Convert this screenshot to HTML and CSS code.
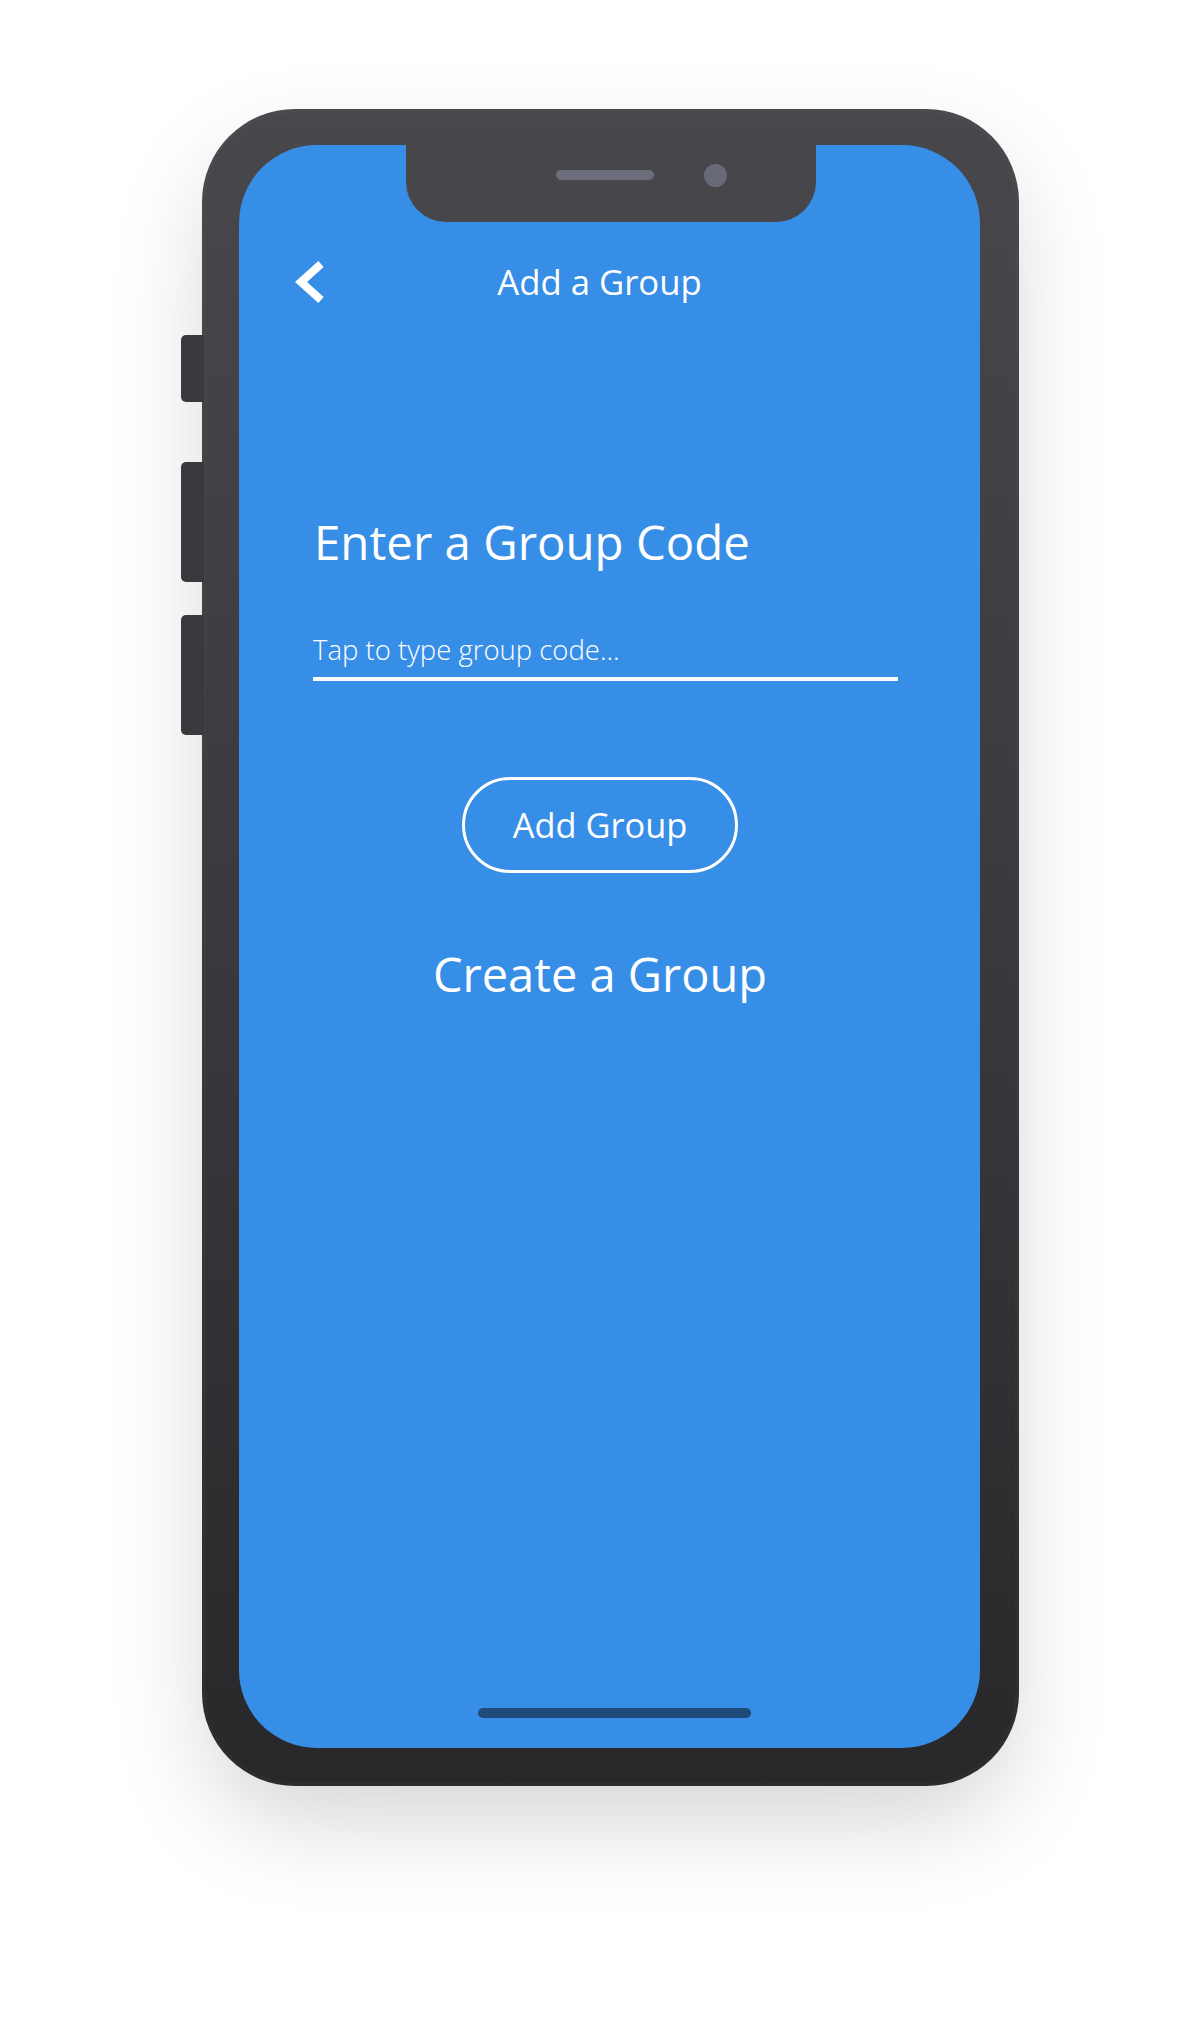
FILE: index.html
```html
<!DOCTYPE html>
<html lang="en">
<head>
<meta charset="utf-8">
<title>Add a Group</title>
<link rel="stylesheet" href="styles.css">
</head>
<body>
<div class="stage">
  <div class="phone">
    <span class="side-btn side-btn--mute"></span>
    <span class="side-btn side-btn--up"></span>
    <span class="side-btn side-btn--down"></span>
    <div class="screen">
      <div class="notch">
        <span class="speaker"></span>
        <span class="camera"></span>
      </div>
      <header class="nav">
        <svg class="back" width="30" height="46" viewBox="0 0 30 46" aria-label="Back">
          <polyline points="27,5 7,23 27,41" fill="none" stroke="#ffffff" stroke-width="8" stroke-linejoin="miter" stroke-linecap="butt"/>
        </svg>
        <h1 class="nav-title">Add a Group</h1>
        <span class="nav-spacer"></span>
      </header>
      <main class="content">
        <h2 class="heading">Enter a Group Code</h2>
        <div class="field"><span class="placeholder">Tap to type group code...</span></div>
        <div class="actions">
          <button class="btn-outline" type="button">Add Group</button>
          <a class="create-link">Create a Group</a>
        </div>
      </main>
      <div class="home-indicator"></div>
    </div>
  </div>
</div>
</body>
</html>
```
FILE: styles.css
```css
html, body {
  margin: 0;
  padding: 0;
  background: #ffffff;
}

body {
  font-family: "Open Sans", "Noto Sans", sans-serif;
  color: #ffffff;
}

.stage {
  width: 1200px;
  height: 2038px;
  overflow: hidden;
  padding-top: 109px;
  box-sizing: border-box;
}

.phone {
  position: relative;
  margin-left: 202px;
  width: 817px;
  height: 1677px;
  box-sizing: border-box;
  padding: 36px 39px 38px 37px;
  border-radius: 93px;
  background: linear-gradient(180deg, #48474c 0%, #3b3a3f 45%, #28282a 100%);
  box-shadow: 0 40px 100px -10px rgba(0, 0, 0, 0.18), inset 0 0 0 4px rgba(255, 255, 255, 0.02);
}

.side-btn {
  position: absolute;
  left: -21px;
  width: 23px;
  border-radius: 5px 0 0 5px;
  background: #3a393d;
}

.side-btn--mute { top: 226px; height: 67px; }
.side-btn--up { top: 353px; height: 120px; }
.side-btn--down { top: 506px; height: 120px; }

.screen {
  position: relative;
  width: 741px;
  height: 1603px;
  border-radius: 78px;
  background: #378ee6;
  display: flex;
  flex-direction: column;
  overflow: hidden;
}

.notch {
  position: absolute;
  top: 0;
  left: 167px;
  width: 410px;
  height: 77px;
  box-sizing: border-box;
  padding: 0 0 17px 150px;
  border-radius: 0 0 40px 40px;
  background: #47464b;
  display: flex;
  align-items: center;
  gap: 50px;
}

.speaker {
  width: 98px;
  height: 10px;
  border-radius: 5px;
  background: #6d6e7b;
}

.camera {
  width: 23px;
  height: 23px;
  border-radius: 50%;
  background: #696a77;
}

.nav {
  margin-top: 114px;
  height: 46px;
  padding: 0 75px 0 55px;
  display: grid;
  grid-template-columns: 1fr auto 1fr;
  align-items: center;
}

.back {
  display: block;
  justify-self: start;
}

.nav-title {
  margin: 0;
  font-size: 34.7px;
  font-weight: 400;
  line-height: 1.2;
  white-space: nowrap;
}

.content {
  padding: 0 93px 0 74px;
  display: flex;
  flex-direction: column;
}

.heading {
  margin: 209px 0 0 1px;
  font-size: 47.4px;
  font-weight: 400;
  line-height: 1.2;
  white-space: nowrap;
}

.field {
  margin-top: 62px;
  width: calc(100% + 11px);
  padding-bottom: 11px;
  border-bottom: 4px solid #ffffff;
}

.placeholder {
  display: block;
  font-size: 27.5px;
  font-weight: 300;
  line-height: 1.2;
  color: #ffffff;
}

.actions {
  margin-top: 96px;
  display: flex;
  flex-direction: column;
  align-items: center;
}

.btn-outline {
  width: 276px;
  height: 96px;
  box-sizing: border-box;
  padding: 0;
  border: 3px solid #ffffff;
  border-radius: 48px;
  background: transparent;
  color: #ffffff;
  font-family: "Open Sans", "Noto Sans", sans-serif;
  font-size: 34.4px;
  font-weight: 400;
  line-height: 1.2;
}

.create-link {
  margin-top: 73px;
  font-size: 47px;
  font-weight: 400;
  line-height: 1.2;
  white-space: nowrap;
}

.home-indicator {
  margin-top: auto;
  margin-bottom: 30px;
  margin-left: 239px;
  align-self: flex-start;
  width: 273px;
  height: 10px;
  border-radius: 5px;
  background: #1f4a7c;
}
```
